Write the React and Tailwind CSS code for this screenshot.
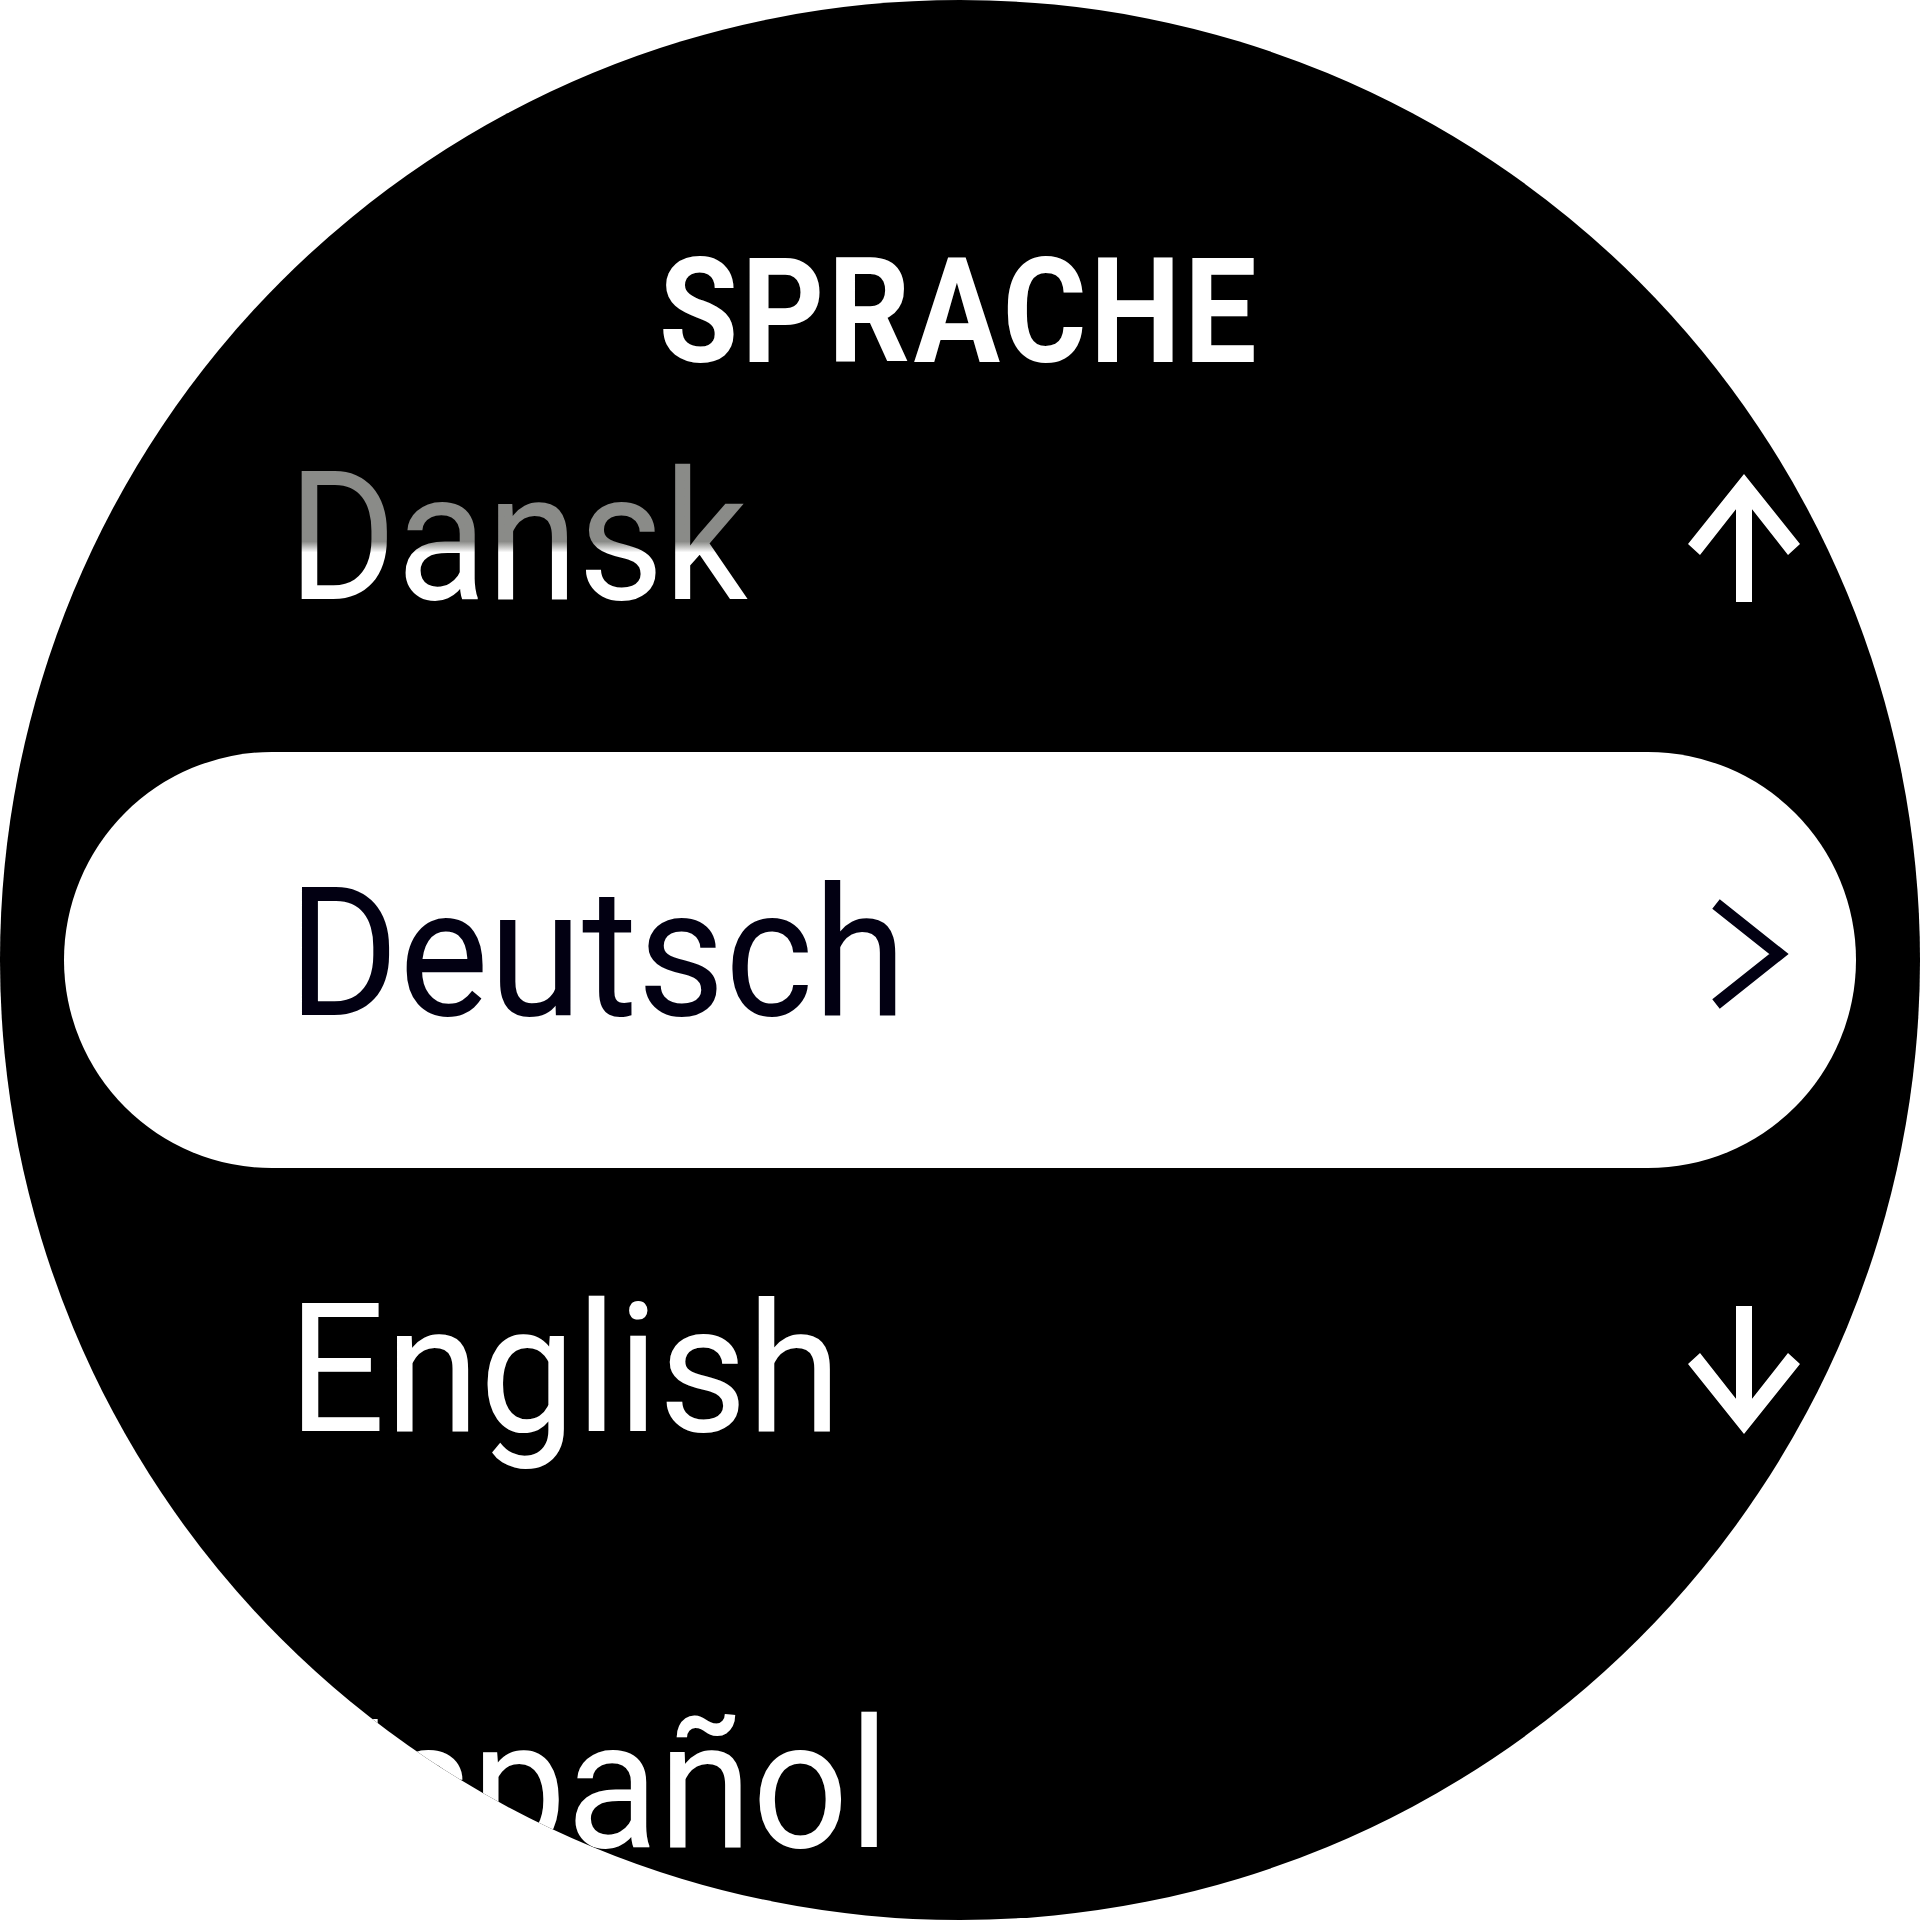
import React from "react";

const font = { fontFamily: "Roboto, 'Liberation Sans', sans-serif" };

function UpArrow() {
  return (
    <svg width="112" height="128" viewBox="0 0 112 128" fill="#fff">
      <polygon points="56,0 112,70 100,81 56,25 12,81 0,70" />
      <rect x="48" y="18" width="16" height="110" />
    </svg>
  );
}

function DownArrow() {
  return (
    <svg width="112" height="128" viewBox="0 0 112 128" fill="#fff">
      <polygon points="56,128 112,58 100,47 56,103 12,47 0,58" />
      <rect x="48" y="0" width="16" height="110" />
    </svg>
  );
}

function Chevron() {
  return (
    <svg width="112" height="128" viewBox="0 0 112 128" fill="none">
      <polyline points="28,14 91,64 28,114" stroke="#020012" strokeWidth="12" strokeLinejoin="miter" />
    </svg>
  );
}

function Row({ children, right, selected }) {
  return (
    <div
      className={
        "mx-[64px] h-[416px] shrink-0 flex items-center justify-between pl-[224px] pr-[56px] pb-[12px] " +
        (selected ? "bg-white rounded-full" : "")
      }
    >
      {children}
      <div className="w-[112px] h-[128px] flex items-center justify-center">{right}</div>
    </div>
  );
}

export default function App() {
  return (
    <div className="w-[1920px] h-[1920px] bg-white" style={font}>
      <div className="w-full h-full rounded-full bg-black overflow-hidden flex flex-col">
        <div className="h-[336px] shrink-0 pt-[240px] flex justify-center">
          <span className="inline-block text-[146px] leading-none font-bold text-white tracking-[4px] scale-x-[0.88] origin-center">
            SPRACHE
          </span>
        </div>
        <Row right={<UpArrow />}>
          <span className="inline-block text-[180px] leading-none origin-left scale-x-[0.92] bg-linear-to-b from-[#8a8b88] from-[52%] to-white to-[58%] bg-clip-text text-transparent">
            Dansk
          </span>
        </Row>
        <Row right={<Chevron />} selected>
          <span className="inline-block text-[180px] leading-none origin-left scale-x-[0.94] text-[#020012]">
            Deutsch
          </span>
        </Row>
        <Row right={<DownArrow />}>
          <span className="inline-block text-[180px] leading-none origin-left scale-x-[0.95] text-white">
            English
          </span>
        </Row>
        <Row right={null}>
          <span className="inline-block text-[180px] leading-none origin-left scale-x-[0.94] text-white">
            Español
          </span>
        </Row>
      </div>
    </div>
  );
}
